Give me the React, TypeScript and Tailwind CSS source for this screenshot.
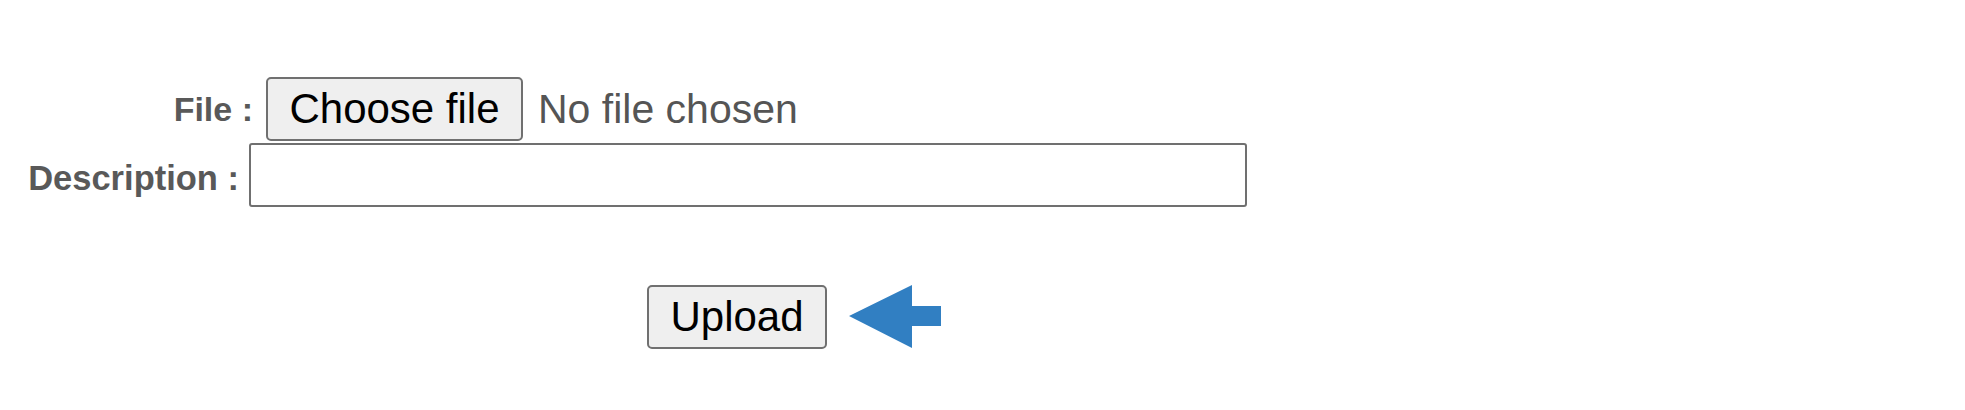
import React from "react";

export default function App() {
  return (
    <div className="w-[1965px] h-[410px] bg-white relative overflow-hidden" style={{ fontFamily: '"Liberation Sans", Arial, sans-serif' }}>
      <div className="pt-[77px]">
        <div className="flex items-center h-[64px]">
          <div className="w-[253px] flex justify-end text-[34px] font-bold text-[#595959] leading-none">File :</div>
          <button className="ml-[13px] w-[257px] h-[64px] bg-[#efefef] border-[2.5px] border-[#707070] rounded-[5px] text-[42px] text-black leading-none flex items-center justify-center">
            Choose file
          </button>
          <span className="ml-[15px] text-[41px] text-[#555555] leading-none">No file chosen</span>
        </div>
        <div className="flex items-center h-[64px] mt-[2px]">
          <div className="w-[239px] flex justify-end text-[34.5px] font-bold text-[#595959] leading-none pt-[6px]">Description :</div>
          <div className="ml-[10px] w-[998px] h-[64px] bg-white border-[2.5px] border-[#707070] rounded-[3px]" />
        </div>
        <div className="flex items-center h-[64px] mt-[78px]">
          <button className="ml-[647px] w-[180px] h-[64px] bg-[#efefef] border-[2.5px] border-[#707070] rounded-[5px] text-[42px] text-black leading-none flex items-center justify-center">
            Upload
          </button>
          <svg className="ml-[22px]" width="93" height="64" viewBox="0 0 93 64">
            <polygon points="0,31 63,0 63,21 92,21 92,41 63,41 63,63" fill="#317fc2" />
          </svg>
        </div>
      </div>
    </div>
  );
}
